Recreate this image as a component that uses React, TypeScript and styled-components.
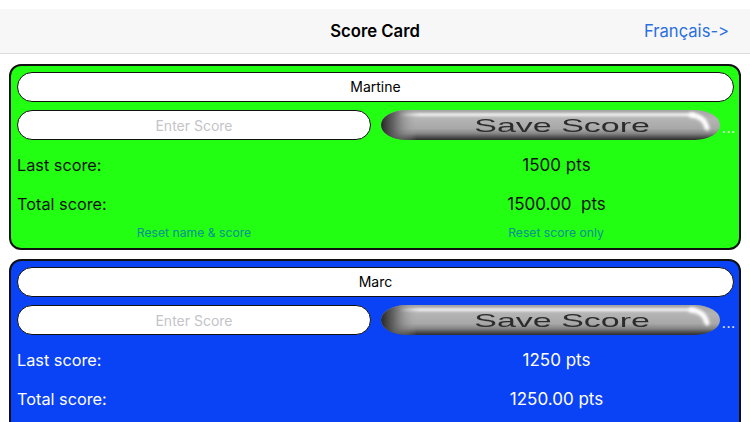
import React from "react";
import styled, { createGlobalStyle } from "styled-components";

const GlobalStyle = createGlobalStyle`
  html, body {
    margin: 0;
    padding: 0;
    background: #ffffff;
    overflow: hidden;
  }
  body {
    font-family: Inter, "Liberation Sans", sans-serif;
    font-feature-settings: "calt" 0, "liga" 0;
  }
`;

const Page = styled.div`
  width: 750px;
  height: 422px;
  overflow: hidden;
  background: #ffffff;
  padding-top: 9px;
  box-sizing: border-box;
`;

const NavBar = styled.header`
  height: 45px;
  box-sizing: border-box;
  background: #f7f7f7;
  border-bottom: 1px solid #dcdcdc;
  display: grid;
  grid-template-columns: 1fr auto 1fr;
  align-items: center;
  padding: 0 21px 1px;
  margin-bottom: 10px;
`;

const NavTitle = styled.h1`
  grid-column: 2;
  margin: 0;
  font-size: 16.7px;
  font-weight: 600;
  color: #000000;
`;

const NavLink = styled.a`
  justify-self: end;
  font-size: 16.6px;
  color: #2a6fe0;
`;

const CardList = styled.div`
  display: flex;
  flex-direction: column;
  gap: 9px;
  padding: 0 9px;
`;

const Card = styled.section<{ $bg: string; $fg: string }>`
  width: 732px;
  height: 186px;
  box-sizing: border-box;
  flex: none;
  background: ${(p) => p.$bg};
  color: ${(p) => p.$fg};
  border: 2px solid #111111;
  border-radius: 12px;
  padding: 6px 5px 0 6px;
`;

const Pill = styled.div`
  height: 30px;
  box-sizing: border-box;
  flex: none;
  background: #ffffff;
  border: 1px solid #111111;
  border-radius: 15px;
  display: flex;
  align-items: center;
  justify-content: center;
  font-size: 14px;
  color: #000000;
`;

const NamePill = styled(Pill)`
  width: 717px;
  padding-bottom: 2px;
`;

const ScoreRow = styled.div`
  display: flex;
  align-items: flex-start;
  margin-top: 8px;
`;

const ScorePill = styled(Pill)`
  width: 354px;
  color: #c4c4c8;
`;

const SaveButton = styled.div`
  position: relative;
  width: 339px;
  height: 30px;
  flex: none;
  margin-left: 10px;
  display: flex;
  align-items: center;
  justify-content: center;
`;

const ButtonArt = styled.svg`
  position: absolute;
  inset: 0;
  display: block;
`;

const SaveLabel = styled.span`
  position: relative;
  margin-left: 24px;
  font-family: "Liberation Sans", Arial, sans-serif;
  font-size: 19px;
  line-height: 1;
  color: #2c2c2c;
  transform: scaleX(1.79);
  white-space: nowrap;
`;

const Dots = styled.span`
  align-self: flex-end;
  flex: none;
  width: 14px;
  margin-left: 2px;
  margin-bottom: 4px;
  font-size: 11px;
  font-weight: 700;
  line-height: 14px;
  letter-spacing: 1px;
  color: #ffffff;
`;

const StatRow = styled.div<{ $top: number }>`
  display: grid;
  grid-template-columns: 354px 1fr;
  margin-top: ${(p) => p.$top}px;
  height: 24px;
  align-items: center;
  font-size: 16.3px;
`;

const StatValue = styled.span`
  text-align: center;
  margin-left: 10px;
  margin-right: 2px;
  font-size: 17px;
  white-space: pre;
`;

const ResetRow = styled.div`
  display: grid;
  grid-template-columns: 354px 1fr;
  margin-top: 10px;
  font-size: 12.2px;
  line-height: 14px;
  color: #0a8f94;
`;

const ResetLink = styled.a`
  text-align: center;
`;

const ResetOnly = styled(ResetLink)`
  margin-left: 10px;
  margin-right: 3px;
`;

// glossy pill that the app uses as the button image
function SaveArt({ id }: { id: string }) {
  return (
    <ButtonArt width="339" height="30" viewBox="0 0 339 30">
      <defs>
        <clipPath id={`${id}-clip`}>
          <rect x="0" y="0" width="339" height="30" rx="25" ry="15" />
        </clipPath>
        <linearGradient id={`${id}-body`} x1="0" y1="0" x2="0" y2="1">
          <stop offset="0" stopColor="#a4a4a4" />
          <stop offset="0.3" stopColor="#b4b4b4" />
          <stop offset="0.62" stopColor="#a8a8a8" />
          <stop offset="0.78" stopColor="#868686" />
          <stop offset="0.9" stopColor="#525252" />
          <stop offset="1" stopColor="#2c2c2c" />
        </linearGradient>
        <linearGradient id={`${id}-left`} x1="0" y1="0" x2="1" y2="0">
          <stop offset="0" stopColor="#262626" />
          <stop offset="0.35" stopColor="#5c5c5c" stopOpacity="0.9" />
          <stop offset="1" stopColor="#a8a8a8" stopOpacity="0" />
        </linearGradient>
        <linearGradient id={`${id}-shine`} x1="0" y1="0" x2="1" y2="0">
          <stop offset="0" stopColor="#ececec" stopOpacity="0" />
          <stop offset="0.07" stopColor="#ececec" />
          <stop offset="1" stopColor="#ececec" />
        </linearGradient>
        <filter id={`${id}-soft`} x="-10%" y="-150%" width="120%" height="400%">
          <feGaussianBlur stdDeviation="1.2" />
        </filter>
        <filter id={`${id}-glow`} x="-60%" y="-60%" width="220%" height="220%">
          <feGaussianBlur stdDeviation="1.6" />
        </filter>
      </defs>
      <g clipPath={`url(#${id}-clip)`}>
        <rect width="339" height="30" fill={`url(#${id}-body)`} />
        <rect width="36" height="30" fill={`url(#${id}-left)`} />
        <rect x="18" y="3" width="296" height="3.5" fill={`url(#${id}-shine)`} filter={`url(#${id}-soft)`} />
        <path
          d="M310 5Q323 6 326 18"
          stroke="#ffffff"
          strokeWidth="5"
          strokeLinecap="round"
          filter={`url(#${id}-glow)`}
          fill="none"
        />
      </g>
    </ButtonArt>
  );
}

interface Player {
  name: string;
  bg: string;
  fg: string;
  last: string;
  total: string;
  resetVisible: boolean;
}

const players: Player[] = [
  { name: "Martine", bg: "#22ff12", fg: "#101010", last: "1500 pts", total: "1500.00  pts", resetVisible: true },
  // second card runs off the bottom of the screen before its reset links
  { name: "Marc", bg: "#0a42f5", fg: "#ffffff", last: "1250 pts", total: "1250.00 pts", resetVisible: false },
];

export default function App() {
  return (
    <Page>
      <GlobalStyle />
      <NavBar>
        <NavTitle>Score Card</NavTitle>
        <NavLink>Français-&gt;</NavLink>
      </NavBar>
      <CardList>
        {players.map((p) => (
          <Card key={p.name} $bg={p.bg} $fg={p.fg}>
            <NamePill>{p.name}</NamePill>
            <ScoreRow>
              <ScorePill>Enter Score</ScorePill>
              <SaveButton>
                <SaveArt id={`save-${p.name}`} />
                <SaveLabel>Save Score</SaveLabel>
              </SaveButton>
              <Dots>...</Dots>
            </ScoreRow>
            <StatRow $top={13}>
              <span>Last score:</span>
              <StatValue>{p.last}</StatValue>
            </StatRow>
            <StatRow $top={15}>
              <span>Total score:</span>
              <StatValue>{p.total}</StatValue>
            </StatRow>
            {p.resetVisible && (
              <ResetRow>
                <ResetLink>Reset name &amp; score</ResetLink>
                <ResetOnly>Reset score only</ResetOnly>
              </ResetRow>
            )}
          </Card>
        ))}
      </CardList>
    </Page>
  );
}
